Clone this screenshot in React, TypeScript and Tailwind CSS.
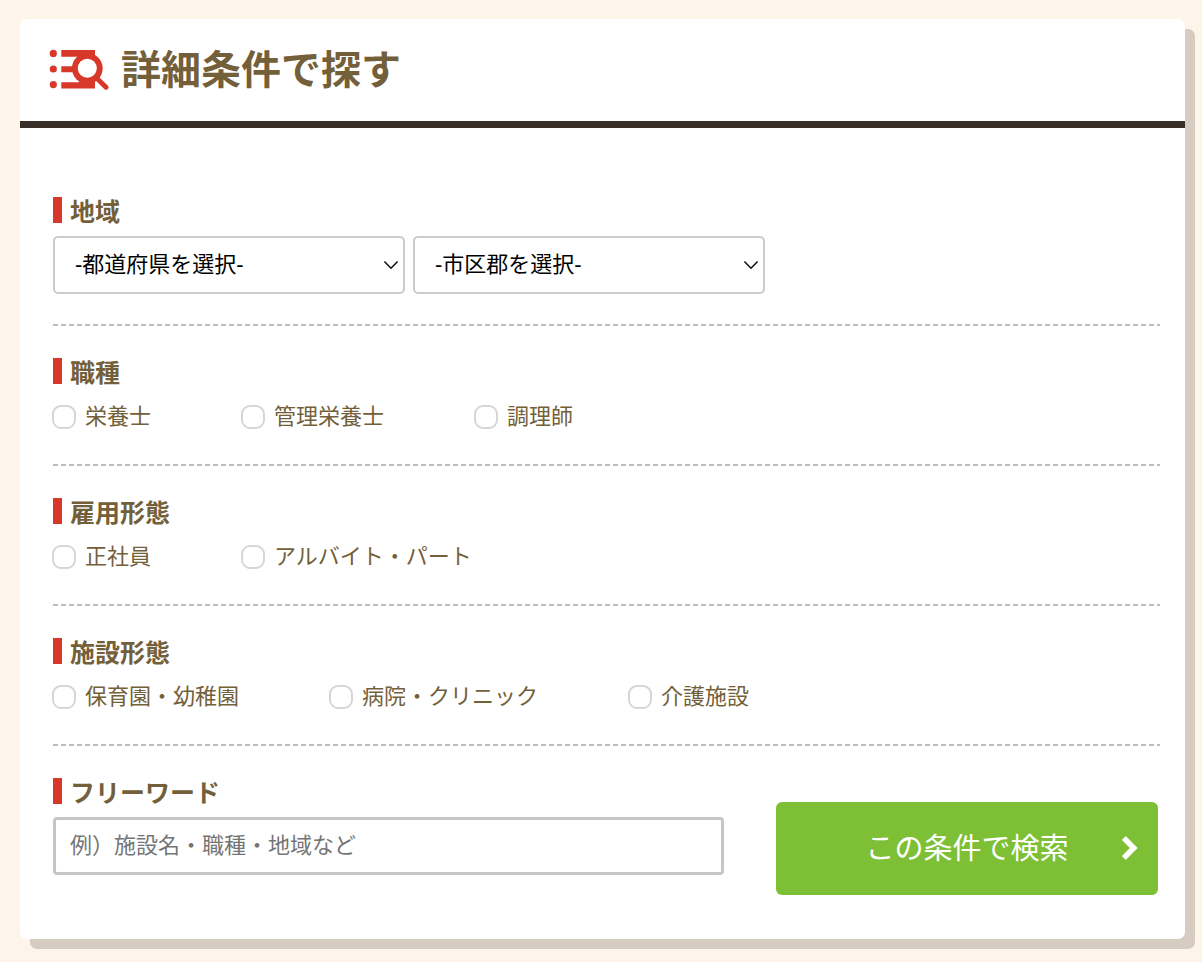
import type { ReactNode } from "react";

const checkGroups = [
  { title: "職種", name: "job", options: ["栄養士", "管理栄養士", "調理師"] },
  { title: "雇用形態", name: "employment", options: ["正社員", "アルバイト・パート"] },
  { title: "施設形態", name: "facility", options: ["保育園・幼稚園", "病院・クリニック", "介護施設"] },
];

const headingClass =
  "flex items-start gap-2 text-[25px] leading-[30px] font-bold before:h-[26px] before:w-[9px] before:shrink-0 before:bg-[#d83829]";

function SearchListIcon() {
  return (
    <svg className="h-[42px] w-[60px] shrink-0" viewBox="0 0 60 42" fill="#d83829" aria-hidden="true">
      <circle cx="4.3" cy="4.4" r="3.6" />
      <circle cx="4.3" cy="20" r="3.6" />
      <circle cx="4.3" cy="35.6" r="3.6" />
      <path d="M12.3 1H46v6.7H12.3zM12.3 17.2H26v6H12.3zM12.3 33.2H46v6.3H12.3z" />
      <path d="M30 5h16v30H30z" />
      <circle cx="38.3" cy="19.3" r="15.4" />
      <path d="M47 28.5L57 38.2" stroke="#d83829" strokeWidth="5" strokeLinecap="round" />
      <circle cx="38.3" cy="19.3" r="9.5" fill="#fff" />
    </svg>
  );
}

function Section({ children, className = "pt-8" }: { children: ReactNode; className?: string }) {
  return (
    <div className={className}>
      <div className="pb-[30px]">{children}</div>
      <div className="h-[2px] bg-[repeating-linear-gradient(90deg,#bdbdbd_0_5px,transparent_5px_8px)]" />
    </div>
  );
}

function SelectBox({ label, placeholder }: { label: string; placeholder: string }) {
  return (
    <div className="relative w-full max-w-[352px]">
      <select
        aria-label={label}
        className="block h-[58px] w-full appearance-none rounded-[5px] border-2 border-[#cccccc] bg-white pr-10 pl-5 text-[22px] leading-8 text-black"
      >
        <option>{placeholder}</option>
      </select>
      <svg
        className="pointer-events-none absolute top-6 right-[6px] h-[10px] w-4"
        viewBox="0 0 16 10"
        fill="none"
        stroke="#111"
        strokeWidth="1.6"
        aria-hidden="true"
      >
        <path d="M1.4 1.5L8 8.2L14.6 1.5" />
      </svg>
    </div>
  );
}

export default function App() {
  return (
    <div className="min-h-screen bg-[#fef5ea] pt-[19px] pr-[17px] pb-[23px] pl-5 font-['Liberation_Sans','Noto_Sans_CJK_JP',sans-serif] text-[#735f3a]">
      <form className="rounded-[7px] bg-white shadow-[10px_10px_0_#d7ccc2]" onSubmit={(e) => e.preventDefault()}>
        <div className="flex h-[109px] items-center gap-3 border-b-[7px] border-[#3a2e28] pl-[29px]">
          <SearchListIcon />
          <h1 className="text-[40px] leading-[56px] font-bold">詳細条件で探す</h1>
        </div>

        <div className="pr-[25px] pb-11 pl-[33px]">
          <Section className="pt-[69px]">
            <h2 className={headingClass}>地域</h2>
            <div className="mt-[9px] flex gap-2">
              <SelectBox label="都道府県" placeholder="-都道府県を選択-" />
              <SelectBox label="市区郡" placeholder="-市区郡を選択-" />
            </div>
          </Section>

          {checkGroups.map((group) => (
            <Section key={group.name}>
              <fieldset>
                <legend className={headingClass}>{group.title}</legend>
                <div className="mt-3 -ml-px flex flex-wrap gap-x-[90px]">
                  {group.options.map((option) => (
                    <label key={option} className="flex items-center gap-[9px] text-[22px] leading-[34px]">
                      <input
                        type="checkbox"
                        name={group.name}
                        value={option}
                        className="size-6 appearance-none rounded-[9px] border-2 border-[#d6d6d6] bg-white checked:bg-[#d83829]"
                      />
                      {option}
                    </label>
                  ))}
                </div>
              </fieldset>
            </Section>
          ))}

          <div className="flex items-end justify-between gap-[52px] pr-[2px]">
            <div className="flex-1 pt-8 pb-5">
              <label htmlFor="freeword" className={headingClass}>
                フリーワード
              </label>
              <input
                id="freeword"
                type="text"
                placeholder="例）施設名・職種・地域など"
                className="mt-[9px] block h-[58px] w-full rounded-[4px] border-[3px] border-[#c6c6c6] bg-white px-[14px] text-[22px] placeholder:text-[#757575]"
              />
            </div>
            <button
              type="submit"
              className="relative h-[93px] w-[382px] rounded-md bg-[#7dc036] text-[29px] leading-10 text-white"
            >
              この条件で検索
              <svg
                className="absolute top-[34px] right-5 h-6 w-[17px]"
                viewBox="0 0 17 24"
                fill="none"
                stroke="currentColor"
                strokeWidth="5.4"
                aria-hidden="true"
              >
                <path d="M2.8 2L12.8 12L2.8 22" />
              </svg>
            </button>
          </div>
        </div>
      </form>
    </div>
  );
}
